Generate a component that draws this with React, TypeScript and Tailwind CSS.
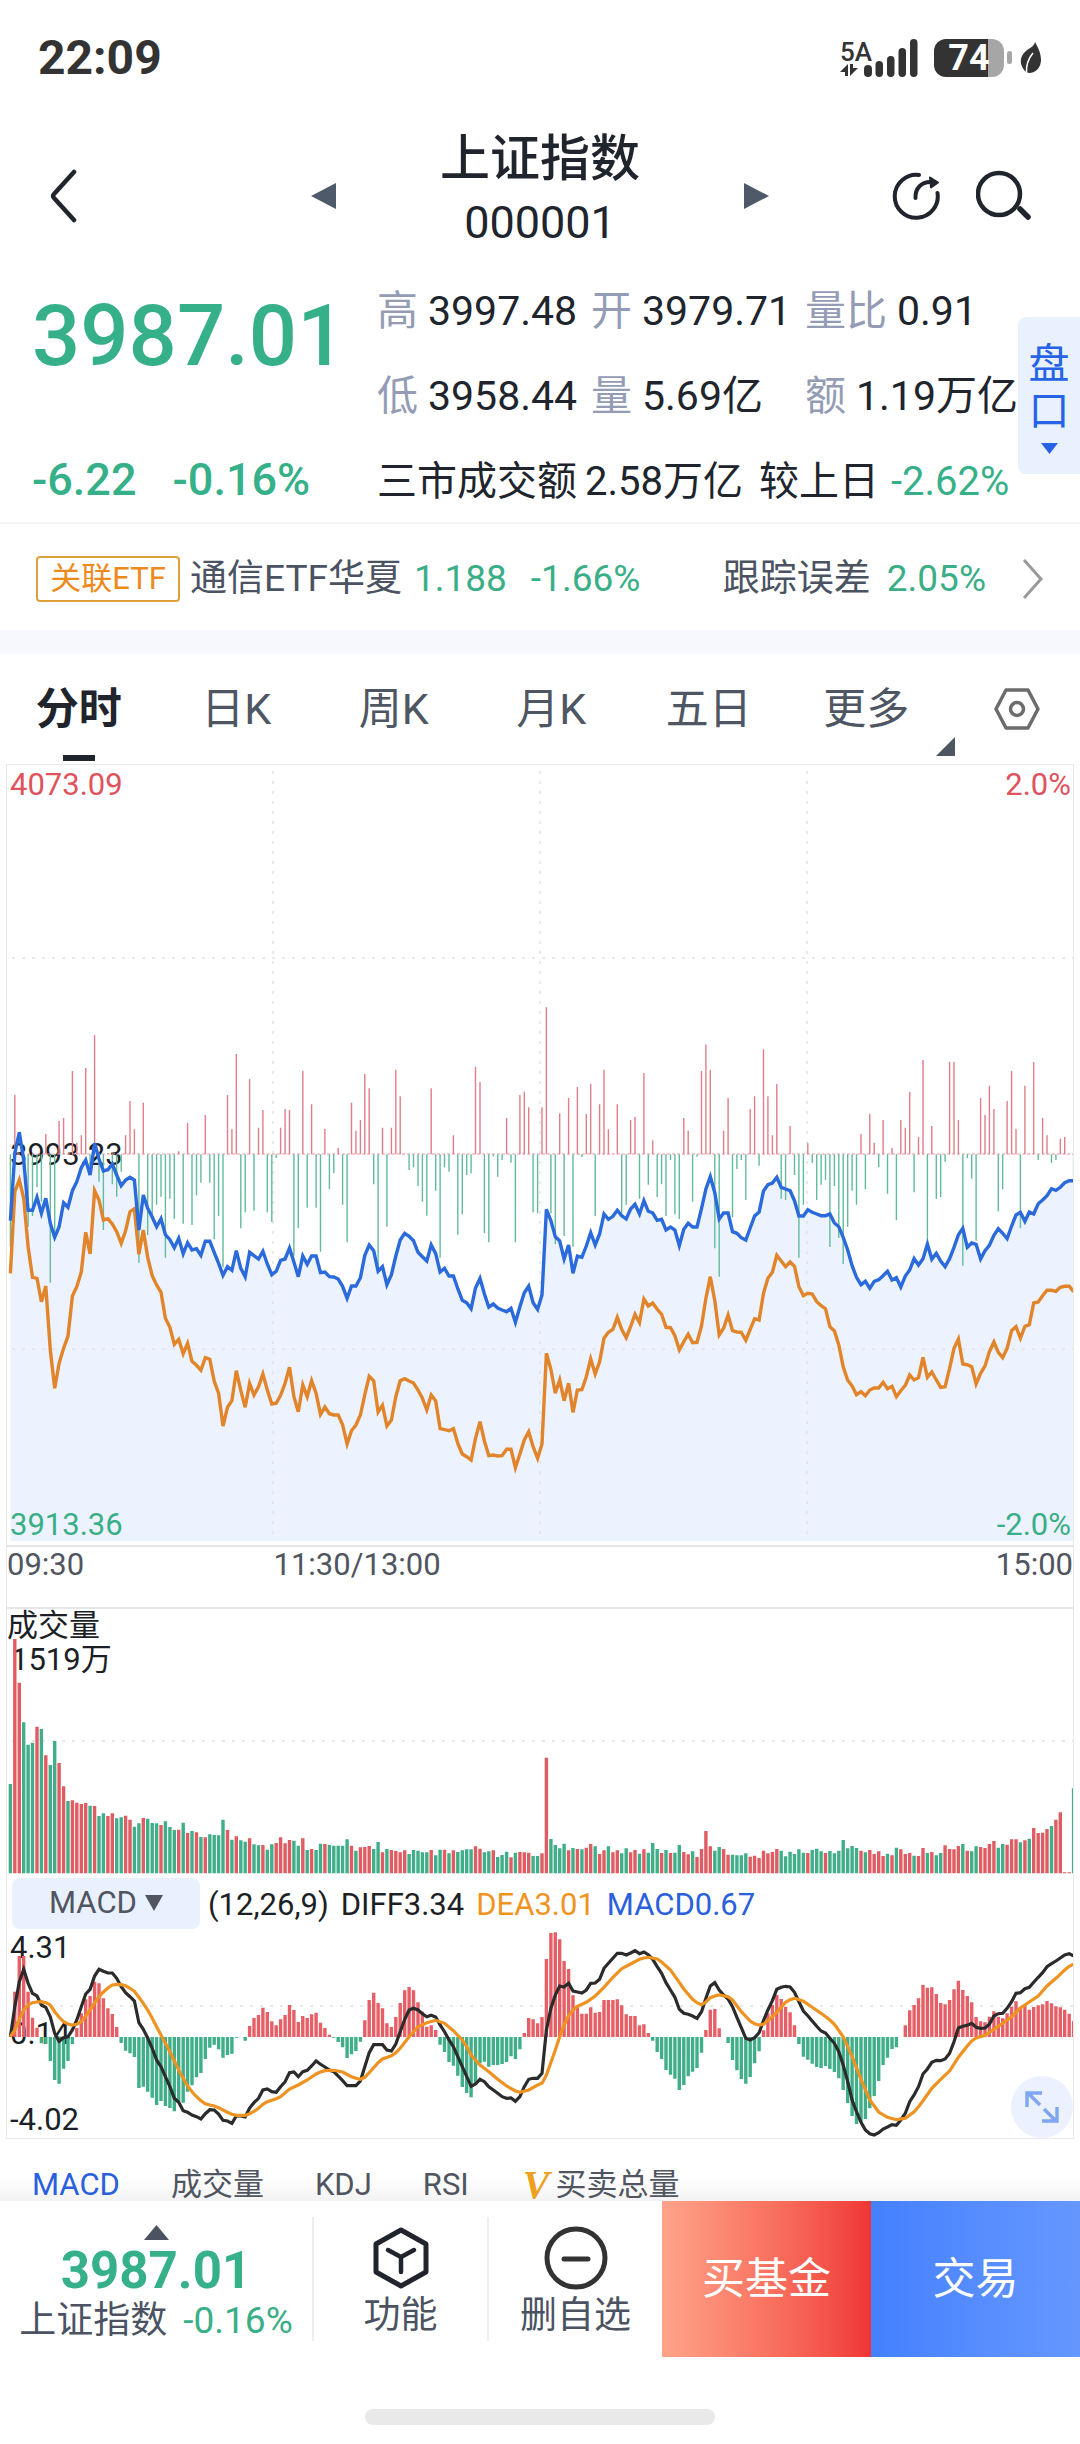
import React from "react";

type Point = [number, number];

// Minute slots run from 0 (09:30) to 240 (15:00)
const FIRST_X = 10.4;
const STEP_X = 4.43;
const slotX = (slot: number) => FIRST_X + STEP_X * slot;

const toNumbers = (source: string) => source.trim().split(/\s+/).map(Number);

const toPoints = (source: string): Point[] =>
  source
    .trim()
    .split(/\s+/)
    .map((pair) => pair.split(":").map(Number) as Point);

// Levels are counted downwards, three to one chart unit
const MOMENTUM_ZERO = 523;
const momentum = toNumbers(`
800 345 523 523 740 708 622 665 462 908 760 423 414 523 273 488 466 264 560 166
605 750 520 613 650 575 466 363 448 848 368 765 710 674 650 833 656 717 514 731
429 735 646 608 405 608 778 708 862 345 447 222 745 697 297 692 443 390 697 726
534 443 387 390 827 745 273 683 373 683 815 447 627 580 504 674 787 368 452 420
282 325 613 857 443 740 443 269 349 521 570 562 618 665 707 325 632 833 562 575
466 764 703 585 580 260 306 759 787 529 590 540 414 548 787 345 335 382 697 700
382 82 700 792 400 768 354 800 321 531 402 312 708 373 269 448 521 373 700 674
420 410 656 279 614 481 651 613 708 540 703 717 414 452 665 530 273 194 269 805
890 452 354 712 567 540 660 387 349 557 208 349 466 312 656 660 438 585 833 674
490 549 660 614 600 801 618 774 852 740 632 674 462 628 401 488 562 420 641 504
721 420 443 335 637 471 240 778 438 656 651 545 246 246 420 857 534 596 782 354
405 317 387 694 628 363 273 447 745 317 521 246 540 414 466 549 540 476 471 521
597`);

const price = toNumbers(`
722 520 457 540 691 691 652 700 655 730 772 740 668 682 632 605 563 540 585 490
537 573 569 552 585 617 600 592 600 750 645 685 711 740 716 764 779 803 775 821
788 810 806 826 784 784 817 850 886 860 871 812 865 890 817 827 837 814 852 884
874 841 837 804 846 890 828 853 828 828 878 876 890 891 897 919 955 918 918 893
826 795 812 874 860 914 884 828 780 760 769 782 817 830 843 795 821 876 865 888
888 926 961 968 986 924 895 942 981 972 984 990 995 985 1027 980 938 918 968 988
945 688 722 770 783 837 795 880 828 832 798 758 795 762 702 718 709 691 707 717
687 673 702 662 694 699 721 718 750 741 750 797 748 730 741 741 686 627 590 638
717 699 699 755 760 773 780 744 708 696 633 614 609 592 622 627 632 662 708 708
689 697 702 707 707 702 729 740 772 810 857 892 914 904 925 904 899 887 874 900
893 921 888 870 836 855 836 792 838 820 843 860 836 802 764 745 802 789 793 837
812 796 766 746 760 776 738 705 697 724 696 702 671 660 647 626 631 622 608 602
602 612`);

const average = toNumbers(`
880 635 600 655 800 892 895 965 918 1110 1225 1150 1105 1068 948 920 876 757 822 632
660 720 716 732 755 790 752 695 686 823 750 832 887 915 937 1015 1042 1093 1078 1121
1090 1144 1156 1171 1133 1138 1203 1240 1338 1282 1262 1172 1232 1282 1210 1245 1220 1182 1230 1272
1270 1246 1210 1162 1250 1295 1215 1250 1202 1240 1303 1281 1301 1305 1305 1334 1392 1352 1335 1305
1244 1189 1202 1296 1276 1338 1320 1250 1202 1196 1203 1209 1230 1255 1290 1245 1263 1346 1349 1352
1346 1390 1422 1430 1440 1375 1325 1383 1427 1425 1428 1427 1408 1408 1463 1422 1380 1355 1400 1435
1392 1120 1168 1240 1200 1262 1210 1297 1230 1229 1190 1137 1182 1145 1075 1057 1048 1012 1048 1073
1040 1003 1028 957 978 969 988 1003 1042 1043 1067 1110 1085 1063 1088 1087 1038 955 890 962
1065 1045 1005 1052 1056 1057 1081 1048 1016 1020 940 895 877 826 843 860 846 859 920 947
940 942 965 977 986 1040 1053 1095 1160 1201 1218 1244 1235 1247 1230 1224 1224 1207 1226 1219
1250 1232 1216 1185 1200 1193 1132 1192 1176 1200 1222 1220 1165 1105 1077 1152 1154 1160 1212 1180
1158 1115 1086 1117 1133 1105 1052 1040 1075 1039 1034 969 966 947 931 931 934 922 919 919
935`);

// r = rising minute, g = falling minute
const VOLUME_ZERO = 1240;
const volume = `
g972 r537 r668 g787 g854 g848 r800 g807 r886 g915 g843 r909 r979 g1023 r1021 r1028 r1032 r1029 g1037 r1038
g1068 g1060 r1068 r1060 g1075 g1072 r1067 r1079 g1100 g1090 r1074 g1076 g1089 g1090 r1095 g1084 g1101 g1110 r1109 g1088
r1119 g1113 r1117 g1131 r1132 g1123 g1125 g1126 g1079 r1110 g1139 r1129 g1141 g1145 r1135 g1153 g1156 r1155 g1169 g1153
r1149 r1132 r1150 r1140 g1142 g1157 r1135 g1170 r1167 g1170 g1151 r1152 g1155 g1157 g1157 g1157 g1138 r1157 g1172 r1162
r1161 r1158 g1167 g1146 r1177 g1167 r1170 r1173 r1177 r1171 g1182 g1170 g1172 g1177 g1177 r1170 g1186 g1169 r1169 g1180
r1171 g1176 g1171 g1168 g1168 r1159 r1166 g1177 g1174 r1171 g1191 g1185 g1175 r1192 g1178 r1176 r1177 r1178 g1188 g1188
r1180 r893 g1137 g1155 g1165 g1151 r1171 g1164 r1167 g1168 r1163 r1152 g1159 r1182 r1171 g1159 r1177 r1171 g1180 g1165
r1177 r1170 g1181 r1168 g1178 g1149 g1167 r1179 g1170 r1179 g1178 g1155 r1176 r1183 g1174 r1191 r1167 r1113 r1159 g1172
g1161 r1167 r1184 g1184 g1186 g1186 g1180 r1190 r1187 r1194 r1172 r1180 r1176 r1167 g1172 g1189 g1175 g1182 g1168 g1178
r1179 g1170 g1166 g1174 r1179 g1173 g1180 g1172 g1140 g1165 g1158 g1164 r1172 g1177 r1170 r1182 r1174 r1188 g1181 r1186
g1163 r1168 r1182 r1179 g1187 r1188 r1164 g1179 r1176 g1186 g1179 r1156 r1167 r1168 r1158 g1152 r1172 g1174 g1159 r1161
r1164 r1152 r1143 g1163 g1152 r1154 r1138 r1138 g1147 r1141 g1136 r1104 r1119 r1118 r1107 g1098 r1079 r1057 r1237 r1237
g985`
  .trim()
  .split(/\s+/)
  .map((token) => ({ rising: token[0] === "r", level: Number(token.slice(1)) }));

const MACD_ZERO = 501;
const macd = toNumbers(`
501 365 258 258 365 443 473 520 522 573 630 641 596 573 522 474 430 388 378 335
340 385 415 432 471 519 542 550 561 654 650 665 683 705 693 708 714 724 695 698
665 646 622 609 567 533 524 538 563 555 551 503 501 512 468 444 435 413 426 454
466 448 435 405 420 456 438 444 433 428 458 474 494 503 516 532 564 553 543 515
451 390 368 399 415 460 471 441 399 361 351 361 397 425 470 466 480 524 546 576
587 617 651 669 682 640 580 575 590 585 585 582 576 559 567 538 489 444 448 460
441 267 189 187 208 273 297 376 405 431 431 412 428 426 390 390 390 388 406 433
438 438 466 463 489 512 546 567 600 614 626 660 645 619 605 594 548 480 419 417
475 501 519 570 601 627 641 621 580 544 481 430 405 375 387 410 427 466 522 560
569 581 591 594 588 597 606 625 660 699 738 762 755 747 715 678 633 585 563 537
532 501 466 421 405 385 345 353 352 372 399 403 390 358 332 360 378 397 441 454
457 440 424 440 445 430 410 394 412 405 419 411 406 403 393 400 409 412 419 431
453`);

const diff = toNumbers(`
500 410 335 298 340 370 378 405 412 440 490 514 503 500 480 450 410 372 358 318
298 304 309 309 325 350 368 380 393 458 478 504 535 570 590 620 650 685 697 722
727 735 740 747 731 719 720 732 751 753 760 738 738 741 714 698 685 660 657 665
667 650 635 608 606 620 605 601 588 573 583 591 600 605 618 632 647 647 647 633
590 548 524 524 524 540 543 522 485 448 420 415 420 431 440 436 441 465 485 510
530 560 590 620 649 642 628 635 650 660 670 680 685 684 694 680 650 628 625 625
610 480 415 375 348 351 340 363 366 369 360 340 339 328 295 280 265 250 250 255
249 242 251 246 254 268 290 310 338 360 382 418 430 433 438 445 425 385 348 338
360 375 387 410 442 473 505 510 503 488 452 420 392 358 352 349 351 367 395 423
437 453 469 483 489 505 520 545 585 635 690 725 757 780 791 795 788 777 771 764
766 750 730 695 675 650 612 597 577 571 572 567 550 515 474 469 466 460 472 475
474 463 438 431 430 415 395 370 368 356 352 337 322 308 290 281 273 264 255 251
257`);

const dea = toPoints(`
0:500 1:480 2:448 3:420 4:405 5:398 6:396 7:395 8:398 9:405 10:425 11:442 12:455 13:462 14:465 15:463
16:455 17:438 18:420 19:398 20:380 21:366 22:354 23:345 24:343 25:344 26:347 27:355 28:364 29:382
30:400 31:420 32:445 33:470 34:495 35:520 36:545 37:572 38:600 39:625 40:648 41:665 42:680 43:692
44:701 45:705 46:708 47:713 48:720 49:727 50:733 51:736 53:736 54:731 55:724 56:715 57:703 58:695
60:686 61:680 63:657 65:645 67:630 69:612 70:606 71:602 73:601 75:606 77:620 78:625 79:628 80:622
81:608 83:578 84:567 86:557 87:548 88:535 90:500 92:470 94:458 96:451 98:460 100:482 102:510 103:530
104:555 106:585 108:605 110:628 112:648 114:663 115:667 117:660 119:645 120:640 121:615 123:540
124:500 125:465 126:437 127:420 128:409 130:397 132:378 134:352 136:322 138:296 140:282 142:268
143:264 144:262 146:267 147:276 149:300 151:337 152:357 154:388 155:398 156:404 157:396 158:383
159:378 160:375 162:380 163:390 165:425 167:453 168:461 169:465 170:463 172:440 174:412 175:397
176:389 177:385 179:394 181:412 183:430 185:450 186:463 188:500 190:560 192:628 194:690 196:726
198:742 200:749 202:745 204:725 205:710 206:692 208:655 210:628 212:603 214:562 216:528 217:513
218:504 220:496 222:478 224:460 226:440 228:414 230:396 232:378 234:348 236:325 238:300 239:289 240:283`);

const withSlots = (levels: number[]): Point[] =>
  levels.slice(0, 241).map((level, slot) => [slot, level]);

const linePath = (points: Point[], top: number) =>
  points
    .map(([slot, level], i) => `${i ? "L" : "M"}${slotX(slot).toFixed(1)} ${(top + level / 3).toFixed(1)}`)
    .join("");

const barsPath = (bars: Point[], top: number, zero: number) =>
  bars
    .map(([slot, level]) => `M${slotX(slot).toFixed(1)} ${(top + zero / 3).toFixed(1)}V${(top + level / 3).toFixed(1)}`)
    .join("");

interface ChartProps {
  height: number;
  label: string;
  className: string;
  children: React.ReactNode;
}

const Chart = ({ height, label, className, children }: ChartProps) => (
  <svg
    viewBox={`7 0 1066 ${height}`}
    preserveAspectRatio="none"
    role="img"
    aria-label={label}
    fill="none"
    className={`relative block w-full ${className}`}
  >
    {children}
  </svg>
);

const PriceChart = () => {
  const top = 215;
  const bars = withSlots(momentum);
  const priceLine = linePath(withSlots(price), top);
  return (
    <div className="relative text-[31px] leading-9">
      <span className="absolute top-[2px] left-[3px] text-[#e0525d]">4073.09</span>
      <span className="absolute top-[2px] right-[2px] text-[#e0525d]">2.0%</span>
      <Chart height={780} label="分时走势" className="h-[780px]">
        <path d={`${priceLine}V776H${FIRST_X}Z`} fill="#ecf3fe" />
        <g stroke="#dfe2e6" strokeWidth="1.5" strokeDasharray="3 7">
          <path d="M273 6V776M540 6V776M807 6V776M12 193H1073M12 584H1073" />
        </g>
        <text x="10" y="400" fill="#1c1f26" fontSize="31">3993.23</text>
        <path d="M12 389H1073" stroke="#ee9aa2" strokeWidth="1" strokeDasharray="3 2" />
        <path d={barsPath(bars.filter(([, level]) => level < MOMENTUM_ZERO), top, MOMENTUM_ZERO)} stroke="#e07f8a" strokeWidth="1.4" />
        <path d={barsPath(bars.filter(([, level]) => level > MOMENTUM_ZERO), top, MOMENTUM_ZERO)} stroke="#62bb9c" strokeWidth="1.4" />
        <path d={linePath(withSlots(average), top)} stroke="#e1842a" strokeWidth="3.4" />
        <path d={priceLine} stroke="#2a6adb" strokeWidth="3.4" />
      </Chart>
      <span className="absolute bottom-[2px] left-[3px] text-[#3aae87]">3913.36</span>
      <span className="absolute right-[2px] bottom-[2px] text-[#3aae87]">-2.0%</span>
    </div>
  );
};

const TimeAxis = () => (
  <div className="grid h-[62px] grid-cols-4 border-t-2 border-[#e4e6ea] text-[31px] leading-9 text-[#50555f]">
    <span>09:30</span>
    <span className="col-span-2">11:30/13:00</span>
    <span className="text-right">15:00</span>
  </div>
);

const VolumeChart = () => {
  const pick = (rising: boolean) =>
    volume
      .map((bar, slot) => ({ ...bar, slot }))
      .filter((bar) => bar.rising === rising)
      .map((bar): Point => [bar.slot, bar.level]);
  return (
    <div className="relative border-t-2 border-[#e4e6ea] text-[31px] text-[#1c1f26]">
      <div className="absolute top-0 left-0 flex flex-col leading-[34px]">
        <span>成交量</span>
        <span className="pl-1">1519万</span>
      </div>
      <Chart height={267} label="成交量" className="h-[267px]">
        <path d="M12 132H1073" stroke="#dfe2e6" strokeWidth="1.5" strokeDasharray="3 7" />
        <path d={barsPath(pick(true), -149, VOLUME_ZERO)} stroke="#e05c63" strokeWidth="3.4" />
        <path d={barsPath(pick(false), -149, VOLUME_ZERO)} stroke="#3fae89" strokeWidth="3.4" />
      </Chart>
    </div>
  );
};

const MacdChart = () => {
  const bars = withSlots(macd);
  return (
    <div className="relative text-[31px] leading-9 text-[#1c1f26]">
      <div className="absolute inset-x-0 top-0 z-10 flex h-[54px] items-center gap-2 pl-[5px]">
        <button className="flex h-[51px] w-[188px] items-center justify-center gap-2 rounded-lg bg-[#e9f0fe] text-[#50555f]">
          MACD
          <svg viewBox="0 0 18 16" fill="currentColor" className="h-4 w-[18px]">
            <path d="M0 0H18L9 16Z" />
          </svg>
        </button>
        <div className="flex gap-3 pt-1">
          <span>(12,26,9)</span>
          <span>DIFF3.34</span>
          <span className="text-[#f0941f]">DEA3.01</span>
          <span className="text-[#2a60dc]">MACD0.67</span>
        </div>
      </div>
      <span className="absolute top-[54px] left-[3px]">4.31</span>
      <span className="absolute top-[140px] left-[3px]">0.14</span>
      <span className="absolute bottom-0 left-[3px]">-4.02</span>
      <Chart height={262} label="MACD" className="h-[262px]">
        <path d="M60 130H1073" stroke="#dfe2e6" strokeWidth="1.5" strokeDasharray="3 7" />
        <path d={barsPath(bars.filter(([, level]) => level < MACD_ZERO), -6, MACD_ZERO)} stroke="#e65f66" strokeWidth="3.4" />
        <path d={barsPath(bars.filter(([, level]) => level > MACD_ZERO), -6, MACD_ZERO)} stroke="#3fae89" strokeWidth="3.4" />
        <path d={linePath(withSlots(diff), -6)} stroke="#2b2b2b" strokeWidth="3.2" />
        <path d={linePath(dea, -6)} stroke="#ee9222" strokeWidth="3.2" />
      </Chart>
      <button aria-label="全屏" className="absolute right-0 bottom-0 z-10 flex size-[62px] items-center justify-center rounded-full bg-[#e9f0fe]/90">
        <svg viewBox="0 0 34 34" fill="none" stroke="#7fa6f2" strokeWidth="3.4" className="size-[34px]">
          <path d="M2 17V3H17M3 3L15 15M32 17V31H17M31 31L19 19" />
        </svg>
      </button>
    </div>
  );
};

const StatusBar = () => (
  <div className="flex h-[115px] items-center justify-between pr-[38px] pl-[38px] text-[#333]">
    <span className="text-[48px] font-bold">22:09</span>
    <div className="flex items-center">
      <div className="flex flex-col items-start">
        <span className="text-[26px] leading-[24px] font-medium">5A</span>
        <svg viewBox="0 0 18 12" fill="currentColor" className="h-3 w-[18px]">
          <path d="M8 0V12H5V8H0ZM10 12V0H13V4H18Z" />
        </svg>
      </div>
      <svg viewBox="0 0 54 38" fill="currentColor" className="-ml-2 h-[38px] w-[54px]">
        <rect x="0" y="26" width="8" height="12" rx="4" />
        <rect x="11.5" y="22" width="7.5" height="16" rx="3.7" />
        <rect x="23" y="17" width="7.5" height="21" rx="3.7" />
        <rect x="34.5" y="9" width="7.5" height="29" rx="3.7" />
        <rect x="46" y="0" width="7.5" height="38" rx="3.7" />
      </svg>
      <div className="ml-4 flex h-[38px] w-[70px] items-center justify-center rounded-xl bg-linear-to-r from-[#333] from-77% to-[#a6a6a6] to-77% text-[36px] font-bold text-white">
        74
      </div>
      <div className="ml-[3px] h-[13px] w-[5px] rounded-sm bg-[#a6a6a6]" />
      <svg viewBox="0 0 22 32" className="ml-2 h-8 w-[22px]">
        <path d="M15 0C17 4 21 10 21 18C21 25 16 31 9 31C8 31 5 29 4 28C-1 21 0 14 6 9C9 6 14 5 15 0Z" fill="#333" />
        <path d="M13 11C8 17 6 23 6.500 31" fill="none" stroke="#fff" strokeWidth="1.600" />
      </svg>
    </div>
  </div>
);

const NavBar = () => (
  <header className="grid h-[152px] grid-cols-[1fr_auto_1fr] items-center text-[#20242c]">
    <div className="flex items-center justify-between pt-[10px] pl-12">
      <button aria-label="返回">
        <svg viewBox="0 0 30 54" fill="none" stroke="currentColor" strokeWidth="4.500" strokeLinecap="round" strokeLinejoin="round" className="h-[54px] w-[30px]">
          <path d="M26 3L6 25Q4 27 6 29L26 51" />
        </svg>
      </button>
      <button aria-label="上一个" className="text-[#4e5a69]">
        <svg viewBox="0 0 25 26" fill="currentColor" className="h-[26px] w-[25px]">
          <path d="M25 0V26L0 13Z" />
        </svg>
      </button>
    </div>
    <div className="flex w-[408px] flex-col items-center">
      <h1 className="text-[50px] leading-[64px] font-medium">上证指数</h1>
      <span className="text-[45px] leading-[64px]">000001</span>
    </div>
    <div className="flex items-center justify-between pt-[10px] pr-12">
      <button aria-label="下一个" className="text-[#4e5a69]">
        <svg viewBox="0 0 25 26" fill="currentColor" className="h-[26px] w-[25px]">
          <path d="M0 0V26L25 13Z" />
        </svg>
      </button>
      <div className="flex items-center gap-9">
        <button aria-label="分享">
          <svg viewBox="0 0 48 48" fill="none" stroke="currentColor" strokeWidth="4" strokeLinecap="round" strokeLinejoin="round" className="size-12">
            <path d="M27 3A21.500 21.500 0 1 0 45.500 21" />
            <path d="M23.500 26C23 16 30 10 38 10" />
            <path d="M38 5.500L46 10.500L39 15.500Z" fill="currentColor" strokeWidth="2" />
          </svg>
        </button>
        <button aria-label="搜索">
          <svg viewBox="0 0 56 52" fill="none" stroke="currentColor" strokeWidth="4.500" strokeLinecap="round" className="h-[52px] w-14">
            <circle cx="23" cy="24" r="21" />
            <path d="M44 39L52 47" strokeWidth="5.500" />
          </svg>
        </button>
      </div>
    </div>
  </header>
);

const stats = [
  { label: "高", value: "3997.48" },
  { label: "开", value: "3979.71" },
  { label: "量比", value: "0.91" },
  { label: "低", value: "3958.44" },
  { label: "量", value: "5.69亿" },
  { label: "额", value: "1.19万亿" },
];

const Quote = () => (
  <section className="relative flex h-[255px] pt-[2px] pl-8 text-[#20242c]">
    <div className="flex w-[345px] flex-col text-[#35b088]">
      <div className="flex h-[170px] items-center pb-[34px] text-[85px] font-medium">3987.01</div>
      <div className="flex h-[85px] items-center gap-9 text-[45px] font-medium">
        <span>-6.22</span>
        <span>-0.16%</span>
      </div>
    </div>
    <div className="flex-1">
      <dl className="grid grid-cols-[214px_214px_1fr] text-[41px]">
        {stats.map(({ label, value }) => (
          <div key={label} className="flex h-[85px] items-center gap-[10px] whitespace-nowrap">
            <dt className="text-[#949cb5]">{label}</dt>
            <dd>{value}</dd>
          </div>
        ))}
      </dl>
      <div className="flex h-[85px] items-center text-[40px] whitespace-nowrap">
        <span>三市成交额</span>
        <span className="ml-2">2.58万亿</span>
        <span className="ml-4">较上日</span>
        <span className="ml-3 text-[#35b088]">-2.62%</span>
      </div>
    </div>
    <button className="absolute top-[50px] right-0 flex h-[157px] w-[62px] flex-col items-center rounded-l-lg bg-[#e9f0fe] pt-6 font-['Liberation_Serif','Noto_Sans_CJK_SC',serif] text-[41px] leading-[47px] text-[#2763e6]">
      <span>盘</span>
      <span>口</span>
      <svg viewBox="0 0 17 11" fill="currentColor" className="mt-2 h-[11px] w-[17px]">
        <path d="M0 0H17L8.500 11Z" />
      </svg>
    </button>
  </section>
);

const RelatedFund = () => (
  <a href="#etf" className="flex h-[108px] items-center border-t-2 border-[#f3f4f6] pt-1 pr-9 pl-9 text-[37px] whitespace-nowrap text-[#4b5362]">
    <span className="flex h-[46px] w-[144px] items-center justify-center rounded-sm border-2 border-[#dfa13c] text-[31px] text-[#ee8a1c]">
      关联ETF
    </span>
    <span className="ml-[10px]">通信ETF华夏</span>
    <span className="ml-3 text-[#3aae87]">1.188</span>
    <span className="ml-6 text-[#3aae87]">-1.66%</span>
    <span className="ml-auto">跟踪误差</span>
    <span className="ml-4 text-[#3aae87]">2.05%</span>
    <svg viewBox="0 0 22 42" fill="none" stroke="#999" strokeWidth="3" className="ml-9 h-[42px] w-[22px]">
      <path d="M2 2L19 21L2 40" />
    </svg>
  </a>
);

const periods = ["分时", "日K", "周K", "月K", "五日", "更多"];

const PeriodTabs = () => (
  <nav className="flex h-[110px] items-center text-[43px] text-[#4e5663]">
    {periods.map((period, i) => (
      <button key={period} className={i === 0 ? "relative h-full flex-1 font-bold text-[#20242c]" : "relative h-full flex-1"}>
        {period}
        {i === 0 && <span className="absolute bottom-[3px] left-1/2 h-[6px] w-8 -translate-x-1/2 bg-[#20242c]" />}
        {period === "更多" && (
          <svg viewBox="0 0 19 19" fill="currentColor" className="absolute -right-[10px] bottom-2 size-[19px]">
            <path d="M19 0V19H0Z" />
          </svg>
        )}
      </button>
    ))}
    <button aria-label="设置" className="flex w-[135px] justify-end pr-10">
      <svg viewBox="0 0 46 42" fill="none" stroke="#6b6b6b" strokeWidth="3.500" strokeLinejoin="round" className="h-[42px] w-[46px]">
        <path d="M12 2H34L44 21L34 40H12L2 21Z" />
        <circle cx="23" cy="21" r="6.500" />
      </svg>
    </button>
  </nav>
);

const IndicatorTabs = () => (
  <nav className="flex h-[62px] items-center bg-linear-to-b from-white from-60% to-[#f3f3f4] pt-[30px] pl-8 text-[31px] leading-8 text-[#50555f]">
    <button className="text-[#2a60dc]">MACD</button>
    <button className="ml-[51px]">成交量</button>
    <button className="ml-[51px]">KDJ</button>
    <button className="ml-[51px]">RSI</button>
    <button className="ml-[54px] flex items-center">
      <span className="font-['Liberation_Serif',serif] text-[40px] font-bold text-[#f0a020] italic">V</span>
      <span className="ml-[6px]">买卖总量</span>
    </button>
  </nav>
);

const BottomBar = () => (
  <footer className="flex h-[156px] text-[37px] leading-[46px] text-[#4b5362]">
    <button className="flex w-[312px] flex-col items-center pt-6">
      <svg viewBox="0 0 25 15" fill="currentColor" className="h-[15px] w-[25px]">
        <path d="M0 15H25L12.500 0Z" />
      </svg>
      <span className="mt-1 text-[51px] leading-[54px] font-bold text-[#35b088]">3987.01</span>
      <span className="flex gap-4 whitespace-nowrap">
        上证指数 <span className="text-[#3aae87]">-0.16%</span>
      </span>
    </button>
    <button className="my-4 flex w-[175px] flex-col items-center gap-[3px] border-l-2 border-[#eceef0] pt-[9px]">
      <svg viewBox="0 0 58 64" fill="none" stroke="#20242c" strokeWidth="5" strokeLinecap="round" strokeLinejoin="round" className="h-16 w-[58px]">
        <path d="M29 4L54 18V46L29 60L4 46V18Z" />
        <path d="M16 24L29 31L42 24M29 31V46" strokeWidth="4.500" />
      </svg>
      功能
    </button>
    <button className="my-4 flex w-[175px] flex-col items-center gap-[3px] border-l-2 border-[#eceef0] pt-[9px]">
      <svg viewBox="0 0 64 64" fill="none" stroke="#333" strokeWidth="5" strokeLinecap="round" className="size-16">
        <circle cx="32" cy="32" r="29" />
        <path d="M20 33H44" />
      </svg>
      删自选
    </button>
    <button className="flex-1 bg-linear-to-r from-[#ffa38a] to-[#ef3535] text-[43px] text-white">买基金</button>
    <button className="flex-1 bg-linear-to-r from-[#4480ff] to-[#6697ff] text-[43px] text-white">交易</button>
  </footer>
);

const App = () => (
  <main className="bg-white font-['Roboto','Noto_Sans_CJK_SC',sans-serif]">
    <StatusBar />
    <NavBar />
    <Quote />
    <RelatedFund />
    <div className="h-6 bg-[#f7f8fd]" />
    <PeriodTabs />
    <section className="mx-[6px] border border-[#e8eaed]">
      <PriceChart />
      <TimeAxis />
      <VolumeChart />
      <MacdChart />
    </section>
    <IndicatorTabs />
    <BottomBar />
    <div className="flex h-[87px] items-end justify-center pb-[19px]">
      <div className="h-4 w-[350px] rounded-full bg-[#e9e9e9]" />
    </div>
  </main>
);

export default App;
